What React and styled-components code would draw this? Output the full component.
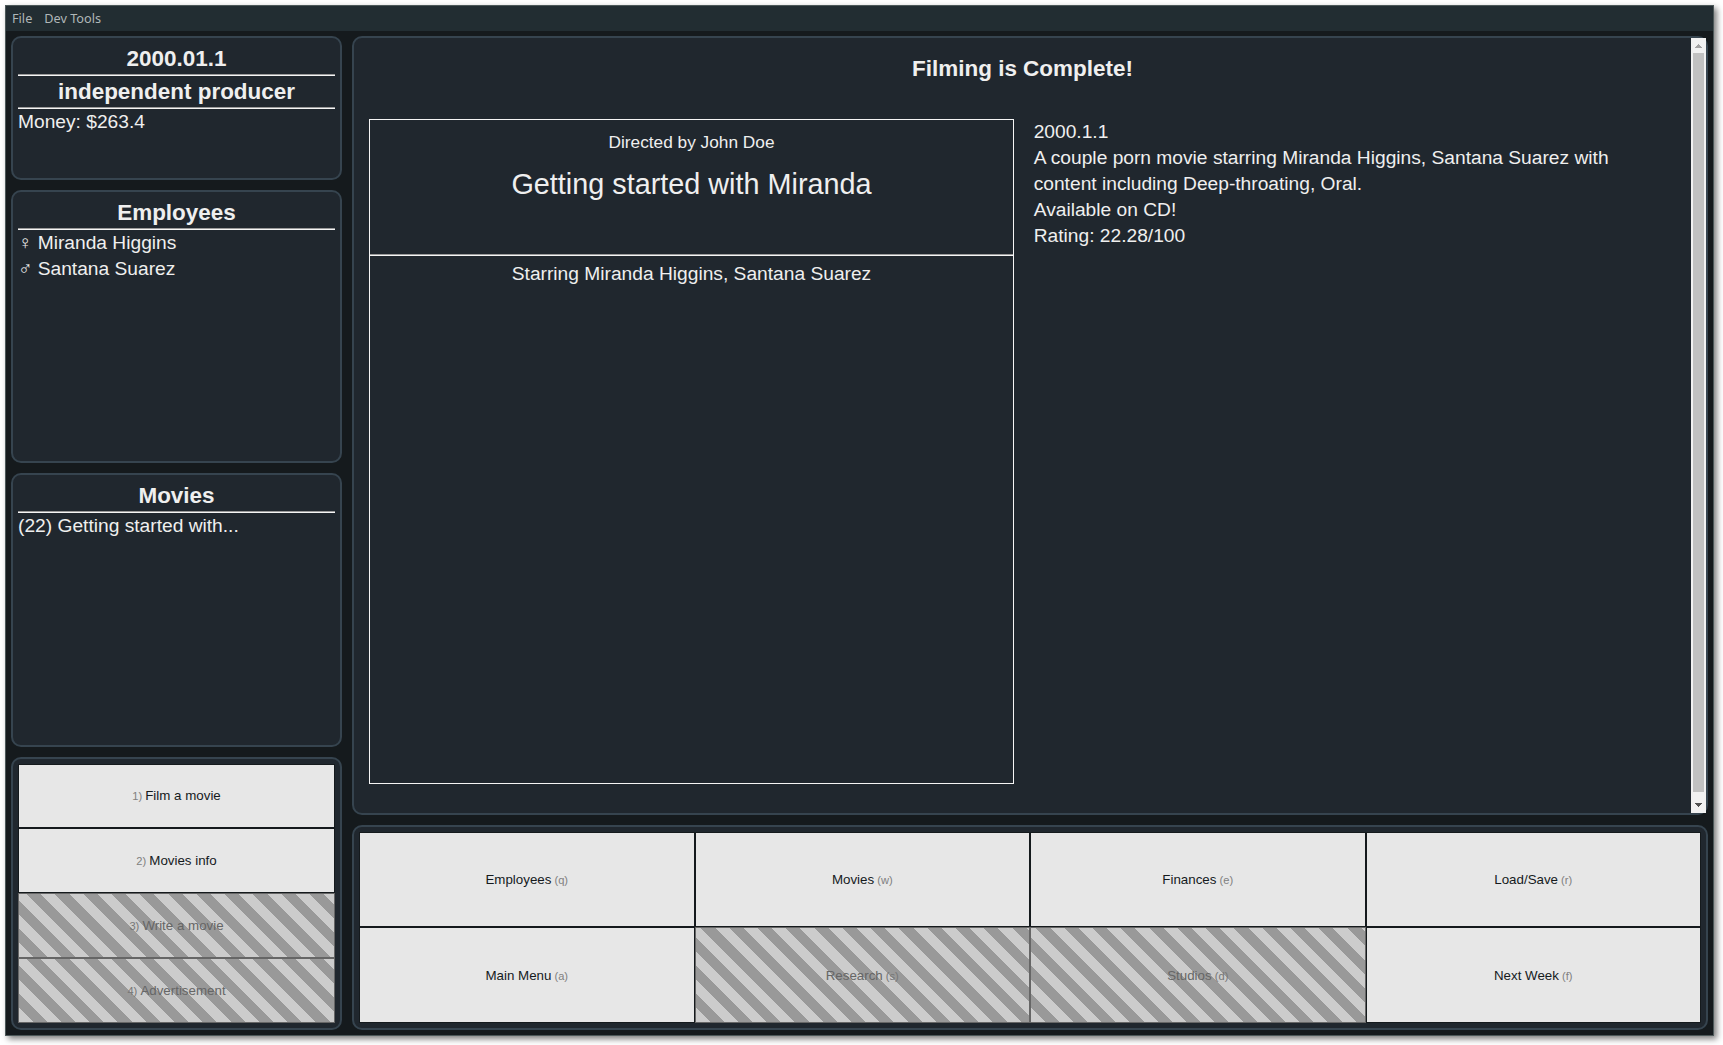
import React from "react";
import styled, { createGlobalStyle, css } from "styled-components";

const GlobalStyle = createGlobalStyle`
  * { box-sizing: border-box; }
  html, body { margin: 0; height: 100%; }
  body {
    background: #fff;
    color: #efefef;
    font-family: "Liberation Sans", Arial, sans-serif;
    font-size: 19.2px;
    line-height: 26px;
    overflow: hidden;
  }
`;

const Desktop = styled.div`
  height: 1045px;
  width: 1723px;
  padding: 5px 9px 9px 5px;
  display: flex;
`;

const Window = styled.div`
  flex: 1;
  display: flex;
  flex-direction: column;
  border: 1px solid #4c5859;
  background: #151a1d;
  box-shadow: 3px 3px 6px rgba(0, 0, 0, 0.5);
`;

const MenuBar = styled.nav`
  height: 25px;
  display: flex;
  align-items: flex-start;
  gap: 12px;
  padding-left: 6px;
  background: #222d32;
  color: #b0b7b8;
  font: 12.7px/24px "Noto Sans", sans-serif;
`;

const Layout = styled.div`
  flex: 1;
  min-height: 0;
  display: grid;
  grid-template-columns: 331px 1fr;
  gap: 10px;
  padding: 5px;
`;

const Sidebar = styled.aside`
  display: grid;
  grid-template-rows: 144px 273px 274px 273px;
  gap: 10px;
`;

const Content = styled.main`
  display: grid;
  grid-template-rows: 779px 205px;
  gap: 10px;
`;

const Panel = styled.section`
  min-height: 0;
  border: 2px solid #36444f;
  border-radius: 10px;
  background: #20272e;
  padding: 5px;
`;

const Heading = styled.h2`
  margin: 0;
  font-size: 22.464px;
  line-height: 31px;
  text-align: center;
`;

const Rule = styled.hr`
  margin: 0;
  border: 0;
  height: 2px;
  border-top: 1px solid #9a9a9a;
  background: #f5f5f5;
`;

const Line = styled.div`
  white-space: pre;
`;

const Buttons = styled.div`
  height: 100%;
  display: grid;
  grid-template-columns: repeat(${(p) => p.$cols}, 1fr);
  grid-template-rows: ${(p) => p.$rows};
`;

const GameButton = styled.button`
  margin: 0;
  padding: 0 0 ${(p) => p.$lift || 0}px;
  border: 1px solid #151a1d;
  border-radius: 0;
  background: #e7e7e7;
  color: #151a1d;
  font: 13.333px "Liberation Sans", Arial, sans-serif;
  ${(p) =>
    p.disabled &&
    css`
      border-color: #666;
      color: #666;
      background: repeating-linear-gradient(45deg, #ccc, #ccc 10px, #999 10px, #999 20px);
    `}
`;

const Hotkey = styled.small`
  font-size: 11.11px;
  white-space: pre;
  color: ${(p) => (p.$off ? "#777" : "#808080")};
`;

const Viewport = styled(Panel)`
  display: flex;
  padding: 0;
`;

const Page = styled.div`
  flex: 1;
  padding: 15px;
`;

const PageTitle = styled(Heading)`
  height: 66px;
`;

const Columns = styled.div`
  display: grid;
  grid-template-columns: 645px 1fr;
  gap: 19.7px;
`;

const Cover = styled.div`
  height: 665px;
  border: 1px solid #f5f5f5;
  text-align: center;
`;

const CoverTop = styled.div`
  height: 134px;
  padding-top: 10px;
`;

const Director = styled.div`
  font-size: 17.28px;
  line-height: 24px;
`;

const MovieTitle = styled.div`
  margin-top: 10px;
  font-size: 28.8px;
  line-height: 40px;
`;

const Starring = styled.div`
  padding-top: 5px;
`;

const Scrollbar = styled.div`
  width: 15px;
  display: flex;
  flex-direction: column;
  align-items: center;
  background: #f1f1f1;
`;

const ScrollArrow = styled.div`
  width: 15px;
  height: 15px;
  display: flex;
  svg { display: block; }
`;

const Thumb = styled.div`
  width: 11px;
  height: 739px;
  margin-bottom: 6px;
  background: #c1c1c1;
`;

const sideActions = [
  ["1", "Film a movie"],
  ["2", "Movies info"],
  ["3", "Write a movie", true],
  ["4", "Advertisement", true],
];

const mainActions = [
  ["q", "Employees"],
  ["w", "Movies"],
  ["e", "Finances"],
  ["r", "Load/Save"],
  ["a", "Main Menu"],
  ["s", "Research", true],
  ["d", "Studios", true],
  ["f", "Next Week"],
];

export default function App() {
  return (
    <Desktop>
      <GlobalStyle />
      <Window>
        <MenuBar>
          <span>File</span>
          <span>Dev Tools</span>
        </MenuBar>
        <Layout>
          <Sidebar>
            <Panel>
              <Heading>2000.01.1</Heading>
              <Rule />
              <Heading>independent producer</Heading>
              <Rule />
              <Line>Money: $263.4</Line>
            </Panel>
            <Panel>
              <Heading>Employees</Heading>
              <Rule />
              <Line>♀ Miranda Higgins</Line>
              <Line>♂ Santana Suarez</Line>
            </Panel>
            <Panel>
              <Heading>Movies</Heading>
              <Rule />
              <Line>(22) Getting started with...</Line>
            </Panel>
            <Panel>
              <Buttons $cols={1} $rows="64px 65px 65px 65px">
                {sideActions.map(([key, label, off], i) => (
                  <GameButton key={key} disabled={off} $lift={i === 0 ? 2 : 0}>
                    <Hotkey $off={off}>{key}) </Hotkey>
                    {label}
                  </GameButton>
                ))}
              </Buttons>
            </Panel>
          </Sidebar>
          <Content>
            <Viewport>
              <Page>
                <PageTitle>Filming is Complete!</PageTitle>
                <Columns>
                  <Cover>
                    <CoverTop>
                      <Director>Directed by John Doe</Director>
                      <MovieTitle>Getting started with Miranda</MovieTitle>
                    </CoverTop>
                    <Rule />
                    <Starring>Starring Miranda Higgins, Santana Suarez</Starring>
                  </Cover>
                  <div>
                    <div>2000.1.1</div>
                    <div>
                      A couple porn movie starring Miranda Higgins, Santana Suarez with content
                      including Deep-throating, Oral.
                    </div>
                    <div>Available on CD!</div>
                    <div>Rating: 22.28/100</div>
                  </div>
                </Columns>
              </Page>
              <Scrollbar>
                <ScrollArrow>
                  <svg width="15" height="15" shapeRendering="crispEdges">
                    <path d="M7 6h1v1h1v1h1v1h1v1H4V9h1V8h1V7h1z" fill="#a3a3a3" />
                  </svg>
                </ScrollArrow>
                <Thumb />
                <ScrollArrow>
                  <svg width="15" height="15" shapeRendering="crispEdges">
                    <path d="M4 5h7v1h-1v1H9v1H8v1H7V8H6V7H5V6H4z" fill="#505050" />
                  </svg>
                </ScrollArrow>
              </Scrollbar>
            </Viewport>
            <Panel>
              <Buttons $cols={4} $rows="95px 96px">
                {mainActions.map(([key, label, off]) => (
                  <GameButton key={key} disabled={off}>
                    {label}
                    <Hotkey $off={off}> ({key})</Hotkey>
                  </GameButton>
                ))}
              </Buttons>
            </Panel>
          </Content>
        </Layout>
      </Window>
    </Desktop>
  );
}
